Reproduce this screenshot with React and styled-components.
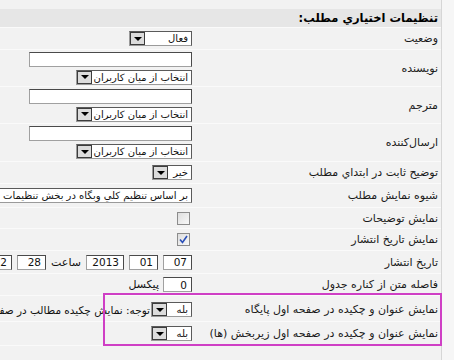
import React from "react";
import styled, { createGlobalStyle } from "styled-components";

const GlobalStyle = createGlobalStyle`
  html, body {
    margin: 0;
    padding: 0;
    background: #f6f6f6;
    overflow: hidden;
  }
  body {
    font-family: "DejaVu Sans", sans-serif;
    font-size: 11px;
    color: #111;
  }
`;

const Page = styled.div`
  width: 454px;
  height: 360px;
  overflow: hidden;
  direction: rtl;
  padding-right: 12px;
  box-sizing: border-box;
  background: #f6f6f6;
`;

const Panel = styled.div`
  width: 442px;
  height: 360px;
  box-sizing: border-box;
  padding-top: 9px;
  background: #f2f2f2;
  border-right: 1px solid #d6d6d6;
  direction: rtl;
`;

const Header = styled.div`
  height: 18px;
  background: #e6e6e6;
  padding-right: 3px;
  font-weight: bold;
  font-size: 11.5px;
  line-height: 18px;
  color: #000;
  border-bottom: 1px solid #fafafa;
`;

const Row = styled.div`
  display: grid;
  grid-template-columns: 246px minmax(0, 1fr);
  align-items: center;
  min-height: ${(p) => p.$h || 21}px;
  border-bottom: 1px solid #fafafa;
  box-sizing: border-box;
`;

const Label = styled.div`
  padding-right: 3px;
  white-space: nowrap;
  color: #1a1a1a;
`;

const Field = styled.div`
  padding-right: 3px;
  display: flex;
  flex-direction: column;
  align-items: flex-start;
  gap: 3px;
  min-width: 0;
`;

const Inline = styled.div`
  display: flex;
  align-items: center;
  gap: ${(p) => p.$gap || 5}px;
  white-space: nowrap;
`;

const SelectBox = styled.div`
  display: flex;
  align-items: stretch;
  flex-shrink: 0;
  width: ${(p) => p.$w}px;
  height: 15px;
  box-sizing: border-box;
  background: #fff;
  border: 1px solid #9a9a9a;
  border-top-color: #5a5a5a;
  border-right-color: #5a5a5a;
`;

const SelectText = styled.div`
  flex: 1;
  padding-right: 3px;
  line-height: 13px;
  font-size: 10px;
  white-space: nowrap;
  overflow: hidden;
`;

const SelectButton = styled.div`
  width: 15px;
  flex-shrink: 0;
  box-sizing: border-box;
  background: #dcdcdc;
  border: 1px solid #3c3c3c;
  display: flex;
  align-items: center;
  justify-content: center;
  &::after {
    content: "";
    border-left: 4px solid transparent;
    border-right: 4px solid transparent;
    border-top: 4px solid #000;
  }
`;

const TextInput = styled.input`
  width: ${(p) => p.$w}px;
  height: 15px;
  box-sizing: border-box;
  flex-shrink: 0;
  padding: 0 4px 0 2px;
  margin: 0;
  border: 1px solid #a0a0a0;
  border-top-color: #4a4a4a;
  border-right-color: #4a4a4a;
  background: #fff;
  font-family: "DejaVu Sans", sans-serif;
  font-size: 10.5px;
  color: #111;
  text-align: right;
  direction: ltr;
  outline: none;
`;

const Check = styled.div`
  width: 13px;
  height: 13px;
  margin-right: 2px;
  box-sizing: border-box;
  border: 1px solid #8c8c8c;
  background: linear-gradient(135deg, #dedede, #f8f8f8);
  display: flex;
  align-items: center;
  justify-content: center;
`;

const Note = styled.span`
  white-space: nowrap;
  font-size: 10.5px;
`;

const Highlighted = styled.div`
  position: relative;
  padding-top: 2px;
`;

const Marker = styled.div`
  position: absolute;
  top: -3px;
  bottom: 0;
  right: -1px;
  left: 103px;
  border: 2px solid #cf3fc5;
  pointer-events: none;
`;

const Select = ({ w, children }) => (
  <SelectBox $w={w}>
    <SelectText>{children}</SelectText>
    <SelectButton />
  </SelectBox>
);

const Checkbox = ({ checked }) => (
  <Check>
    {checked && (
      <svg width="9" height="9" viewBox="0 0 9 9">
        <path d="M1 4.5 L3.5 7.5 L8 1" fill="none" stroke="#2a4fb8" strokeWidth="1.6" />
      </svg>
    )}
  </Check>
);

const UserField = () => (
  <Field>
    <TextInput $w={163} readOnly value="" />
    <Select w={116}>انتخاب از میان کاربران</Select>
  </Field>
);

export default function App() {
  return (
    <>
      <GlobalStyle />
      <Page>
        <Panel>
          <Header>تنظیمات اختیاري مطلب:</Header>
          <Row $h={22}>
            <Label>وضعیت</Label>
            <Field>
              <Select w={63}>فعال</Select>
            </Field>
          </Row>
          <Row $h={37}>
            <Label>نویسنده</Label>
            <UserField />
          </Row>
          <Row $h={37}>
            <Label>مترجم</Label>
            <UserField />
          </Row>
          <Row $h={38}>
            <Label>ارسال‌کننده</Label>
            <UserField />
          </Row>
          <Row $h={22}>
            <Label>توضیح ثابت در ابتداي مطلب</Label>
            <Field>
              <Select w={40}>خیر</Select>
            </Field>
          </Row>
          <Row $h={24}>
            <Label>شیوه نمایش مطلب</Label>
            <Field>
              <Select w={300}>بر اساس تنظیم کلي وبگاه در بخش تنظیمات</Select>
            </Field>
          </Row>
          <Row $h={21}>
            <Label>نمایش توضیحات</Label>
            <Field>
              <Checkbox />
            </Field>
          </Row>
          <Row $h={22}>
            <Label>نمایش تاریخ انتشار</Label>
            <Field>
              <Checkbox checked />
            </Field>
          </Row>
          <Row $h={23}>
            <Label>تاریخ انتشار</Label>
            <Field>
              <Inline $gap={5}>
                <TextInput $w={29} readOnly value="07" />
                <TextInput $w={29} readOnly value="01" />
                <TextInput $w={38} readOnly value="2013" />
                <span>ساعت</span>
                <TextInput $w={29} readOnly value="28" />
                <TextInput $w={29} readOnly value="12" />
              </Inline>
            </Field>
          </Row>
          <Row $h={22}>
            <Label>فاصله متن از کناره جدول</Label>
            <Field>
              <Inline $gap={4}>
                <TextInput $w={29} readOnly value="0" />
                <span>پیکسل</span>
              </Inline>
            </Field>
          </Row>
          <Highlighted>
            <Row $h={24}>
              <Label>نمایش عنوان و چکیده در صفحه اول پایگاه</Label>
              <Field>
                <Inline $gap={1}>
                  <Select w={41}>بله</Select>
                  <Note>توجه: نمایش چکیده مطالب در صفحه اول پایگاه</Note>
                </Inline>
              </Field>
            </Row>
            <Row $h={24}>
              <Label>نمایش عنوان و چکیده در صفحه اول زیربخش (ها)</Label>
              <Field>
                <Select w={41}>بله</Select>
              </Field>
            </Row>
            <Marker />
          </Highlighted>
        </Panel>
      </Page>
    </>
  );
}
